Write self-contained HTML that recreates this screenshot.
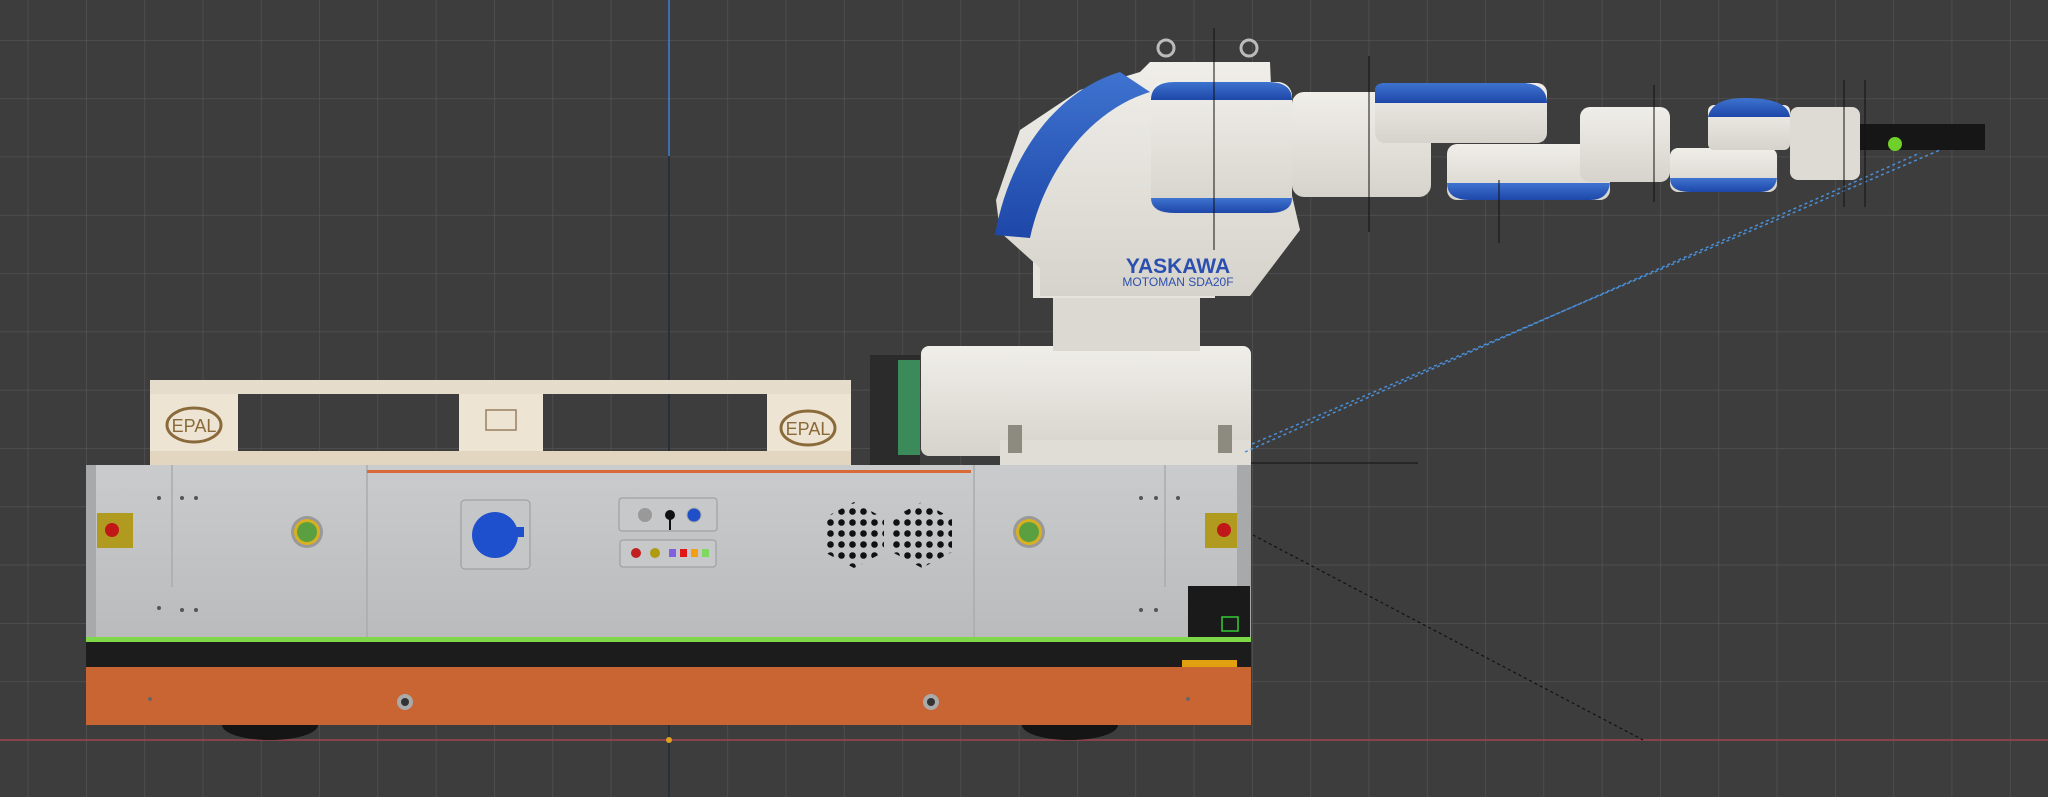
<!DOCTYPE html>
<html><head><meta charset="utf-8"><style>
html,body{margin:0;padding:0;background:#3d3d3d;}
svg{display:block}
</style></head><body>
<svg width="2048" height="797" viewBox="0 0 2048 797" xmlns="http://www.w3.org/2000/svg">
<defs>
<pattern id="g" x="27.7" y="40" width="58.3" height="58.3" patternUnits="userSpaceOnUse">
<path d="M0 0V58.3M0 0H58.3" stroke="#555" stroke-width="1.3" fill="none"/>
</pattern>
<linearGradient id="pan" x1="0" y1="0" x2="0" y2="1"><stop offset="0" stop-color="#c9cbcd"/><stop offset="1" stop-color="#b9bbbd"/></linearGradient>
<linearGradient id="wh" x1="0" y1="0" x2="0" y2="1"><stop offset="0" stop-color="#f0eee9"/><stop offset="1" stop-color="#d6d3cc"/></linearGradient>
<linearGradient id="bl" x1="0" y1="0" x2="0" y2="1"><stop offset="0" stop-color="#3f73d0"/><stop offset="1" stop-color="#1d47a8"/></linearGradient>
<pattern id="hole" width="11" height="11" patternUnits="userSpaceOnUse"><circle cx="5.5" cy="5.5" r="3.3" fill="#111"/></pattern>
</defs>
<rect width="2048" height="797" fill="#3d3d3d"/>
<rect width="2048" height="797" fill="url(#g)"/>
<line x1="669" y1="0" x2="669" y2="156" stroke="#3d7fd0" stroke-width="1.5"/>
<line x1="669" y1="156" x2="669" y2="797" stroke="#1e2a3a" stroke-width="1.5"/>
<line x1="0" y1="740" x2="2048" y2="740" stroke="#a0454f" stroke-width="1.5"/>
<line x1="1253" y1="535" x2="1643" y2="740" stroke="#111" stroke-width="1.2" stroke-dasharray="3,3"/>

<g>
<rect x="150" y="380" width="701" height="14" fill="#e6dccb"/>
<rect x="150" y="394" width="88" height="57" fill="#ede4d3"/>
<rect x="459" y="394" width="84" height="57" fill="#ede4d3"/>
<rect x="767" y="394" width="84" height="57" fill="#ede4d3"/>
<rect x="150" y="451" width="701" height="14" fill="#e2d6c1"/>
<ellipse cx="194" cy="425" rx="27" ry="17" fill="none" stroke="#8a6a3a" stroke-width="3"/>
<text x="194" y="432" font-family="Liberation Sans,sans-serif" font-size="18" fill="#8a6a3a" text-anchor="middle">EPAL</text>
<ellipse cx="808" cy="428" rx="27" ry="17" fill="none" stroke="#8a6a3a" stroke-width="3"/>
<text x="808" y="435" font-family="Liberation Sans,sans-serif" font-size="18" fill="#8a6a3a" text-anchor="middle">EPAL</text>
<rect x="486" y="410" width="30" height="20" fill="none" stroke="#9a8060" stroke-width="1.5"/>
</g>

<g>
<rect x="870" y="355" width="50" height="110" fill="#2b2b2b"/>
<rect x="898" y="360" width="22" height="95" fill="#3b8a5a"/>
<rect x="921" y="346" width="330" height="110" rx="8" fill="url(#wh)"/>
<rect x="1000" y="440" width="251" height="25" fill="#e0ddd6"/>
<rect x="1008" y="425" width="14" height="28" fill="#8d8a80"/>
<rect x="1218" y="425" width="14" height="28" fill="#8d8a80"/>
<rect x="1053" y="293" width="147" height="58" fill="#dcd9d2"/>
<rect x="1033" y="253" width="182" height="45" fill="#e6e3dc"/>
<path d="M1150 62 L1270 62 L1272 110 L1300 230 L1250 296 L1040 296 L1040 268 L1000 232 L996 200 L1020 130 L1080 90 L1140 72 Z" fill="url(#wh)"/>
<path d="M1120 72 C1060 90 1010 150 995 235 L1030 238 C1045 170 1090 110 1150 92 Z" fill="url(#bl)"/>
<circle cx="1166" cy="48" r="8" fill="none" stroke="#bbb" stroke-width="3"/>
<circle cx="1249" cy="48" r="8" fill="none" stroke="#bbb" stroke-width="3"/>
<text x="1178" y="273" font-family="Liberation Sans,sans-serif" font-size="21" font-weight="bold" fill="#2b4fb0" text-anchor="middle">YASKAWA</text>
<text x="1178" y="286" font-family="Liberation Sans,sans-serif" font-size="12" fill="#2b4fb0" text-anchor="middle">MOTOMAN SDA20F</text>
</g>
<g>
<rect x="1151" y="82" width="141" height="131" rx="14" fill="url(#wh)"/>
<path d="M1151 100 Q1151 82 1175 82 L1268 82 Q1292 82 1292 100 Z" fill="url(#bl)"/>
<path d="M1151 198 L1292 198 Q1292 213 1268 213 L1175 213 Q1151 213 1151 198 Z" fill="url(#bl)"/>
<rect x="1292" y="92" width="139" height="105" rx="12" fill="url(#wh)"/>
<rect x="1375" y="83" width="172" height="60" rx="10" fill="url(#wh)"/>
<path d="M1375 103 L1375 90 Q1375 83 1385 83 L1525 83 Q1547 85 1547 103 Z" fill="url(#bl)"/>
<rect x="1447" y="144" width="163" height="56" rx="10" fill="url(#wh)"/>
<path d="M1447 183 L1610 183 Q1608 200 1590 200 L1470 200 Q1447 200 1447 183 Z" fill="url(#bl)"/>
<rect x="1580" y="107" width="90" height="75" rx="10" fill="url(#wh)"/>
<rect x="1670" y="148" width="107" height="44" rx="8" fill="url(#wh)"/>
<path d="M1670 178 L1777 178 Q1775 192 1760 192 L1690 192 Q1670 192 1670 178 Z" fill="url(#bl)"/>
<rect x="1708" y="105" width="82" height="45" rx="6" fill="url(#wh)"/>
<path d="M1708 117 Q1712 98 1745 98 Q1788 98 1790 117 Z" fill="url(#bl)"/>
<rect x="1790" y="107" width="70" height="73" rx="8" fill="#dedbd4"/>
<rect x="1860" y="124" width="125" height="26" fill="#161616"/>
<circle cx="1895" cy="144" r="7" fill="#6fd02a"/>
</g>
<line x1="1245" y1="452" x2="1920" y2="153" stroke="#4a8fd8" stroke-width="1.5" stroke-dasharray="3,3"/>
<line x1="1252" y1="444" x2="1940" y2="150" stroke="#4a8fd8" stroke-width="1.5" stroke-dasharray="3,3"/>
<g stroke="#111" stroke-width="1">
<line x1="1214" y1="28" x2="1214" y2="250"/><line x1="1369" y1="56" x2="1369" y2="232"/>
<line x1="1499" y1="180" x2="1499" y2="243"/><line x1="1654" y1="85" x2="1654" y2="202"/>
<line x1="1844" y1="80" x2="1844" y2="207"/><line x1="1865" y1="80" x2="1865" y2="207"/>
<line x1="1251" y1="463" x2="1418" y2="463"/>
</g>

<ellipse cx="270" cy="725" rx="48" ry="15" fill="#151515"/>
<ellipse cx="1070" cy="725" rx="48" ry="15" fill="#151515"/>
<rect x="86" y="465" width="1165" height="172" fill="url(#pan)"/>
<rect x="86" y="465" width="10" height="172" fill="#a7a9ab"/>
<rect x="1237" y="465" width="14" height="172" fill="#a7a9ab"/>
<g stroke="#a9abad" stroke-width="1.5"><line x1="172" y1="465" x2="172" y2="587"/><line x1="367" y1="465" x2="367" y2="637"/><line x1="974" y1="465" x2="974" y2="637"/><line x1="1165" y1="465" x2="1165" y2="587"/></g>
<rect x="367" y="470" width="604" height="3" fill="#d86a3a"/>
<rect x="97" y="513" width="36" height="35" fill="#b09a20"/><circle cx="112" cy="530" r="7" fill="#c01818"/>
<rect x="1205" y="513" width="32" height="35" fill="#b09a20"/><circle cx="1224" cy="530" r="7" fill="#c01818"/>
<circle cx="307" cy="532" r="16" fill="#999"/><circle cx="307" cy="532" r="13" fill="#d8b020"/><circle cx="307" cy="532" r="10" fill="#5aa040"/>
<circle cx="1029" cy="532" r="16" fill="#999"/><circle cx="1029" cy="532" r="13" fill="#d8b020"/><circle cx="1029" cy="532" r="10" fill="#5aa040"/>
<rect x="461" y="500" width="69" height="69" rx="4" fill="#c4c6c8" stroke="#999"/>
<circle cx="495" cy="535" r="23" fill="#1e4fcc"/><rect x="492" y="527" width="32" height="10" fill="#1e4fcc"/>
<rect x="619" y="498" width="98" height="33" rx="3" fill="#c6c8ca" stroke="#999"/>
<circle cx="645" cy="515" r="7" fill="#999"/><circle cx="670" cy="515" r="5" fill="#111"/><line x1="670" y1="515" x2="670" y2="530" stroke="#111" stroke-width="2"/><circle cx="694" cy="515" r="7" fill="#2050c8" stroke="#aaa"/>
<rect x="620" y="540" width="96" height="27" rx="3" fill="#c6c8ca" stroke="#999"/>
<circle cx="636" cy="553" r="5" fill="#c02020"/><circle cx="655" cy="553" r="5" fill="#b09a10"/>
<rect x="669" y="549" width="7" height="8" fill="#8060e0"/><rect x="680" y="549" width="7" height="8" fill="#e01818"/><rect x="691" y="549" width="7" height="8" fill="#f0a010"/><rect x="702" y="549" width="7" height="8" fill="#80d860"/>
<polygon points="854,502 884,518 884,552 854,568 824,552 824,518" fill="url(#hole)"/>
<polygon points="922,502 952,518 952,552 922,568 892,552 892,518" fill="url(#hole)"/>
<g fill="#555"><circle cx="159" cy="498" r="2"/><circle cx="182" cy="498" r="2"/><circle cx="196" cy="498" r="2"/><circle cx="159" cy="608" r="2"/><circle cx="182" cy="610" r="2"/><circle cx="196" cy="610" r="2"/><circle cx="1141" cy="498" r="2"/><circle cx="1156" cy="498" r="2"/><circle cx="1178" cy="498" r="2"/><circle cx="1141" cy="610" r="2"/><circle cx="1156" cy="610" r="2"/></g>
<rect x="1188" y="586" width="62" height="51" fill="#1a1a1a"/><rect x="1222" y="617" width="16" height="14" fill="none" stroke="#3c3" stroke-width="1.5"/>
<rect x="86" y="637" width="1165" height="5" fill="#7ed84a"/>
<rect x="86" y="642" width="1165" height="25" fill="#1c1c1c"/>
<rect x="1182" y="660" width="55" height="10" fill="#e0a010"/>
<rect x="86" y="667" width="1165" height="58" fill="#c96532"/>
<circle cx="405" cy="702" r="8" fill="#aaa"/><circle cx="405" cy="702" r="4" fill="#333"/>
<circle cx="931" cy="702" r="8" fill="#aaa"/><circle cx="931" cy="702" r="4" fill="#333"/>
<circle cx="150" cy="699" r="2" fill="#666"/><circle cx="1188" cy="699" r="2" fill="#666"/>
<circle cx="669" cy="740" r="3" fill="#e0a020"/>
</svg>
</body></html>
